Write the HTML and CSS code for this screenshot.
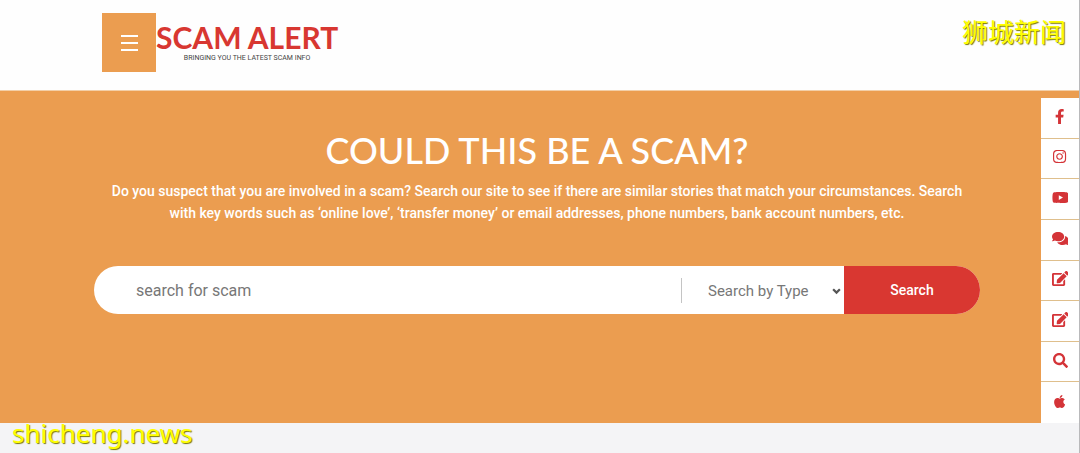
FILE: index.html
```html
<!DOCTYPE html>
<html lang="en">
<head>
<meta charset="utf-8">
<meta name="viewport" content="width=device-width, initial-scale=1">
<title>Scam Alert</title>
<link rel="stylesheet" href="styles.css">
</head>
<body>
<header class="site-header">
  <button class="menu-button" type="button" aria-label="Menu">
    <svg class="menu-icon" viewBox="0 0 18 18" aria-hidden="true"><path d="M1 2h17M1 9h17M1 16h17"/></svg>
  </button>
  <a class="brand" href="#">
    <span class="brand-name">SCAM ALERT</span>
    <span class="brand-tagline">BRINGING YOU THE LATEST SCAM INFO</span>
  </a>
  <span class="watermark watermark-top" lang="zh">狮城新闻</span>
</header>
<main class="hero">
  <h1 class="hero-title">COULD THIS BE A SCAM?</h1>
  <p class="hero-text">Do you suspect that you are involved in a scam? Search our site to see if there are similar stories that match your circumstances. Search with key words such as ‘online love’, ‘transfer money’ or email addresses, phone numbers, bank account numbers, etc.</p>
  <form class="search">
    <input class="search-input" type="text" placeholder="search for scam" aria-label="search for scam">
    <div class="search-type">
      <select class="search-select" aria-label="Search by Type"><option>Search by Type</option></select>
      <svg class="search-arrow" viewBox="0 0 8 6" aria-hidden="true"><path d="M1 1l3 3 3-3"/></svg>
    </div>
    <button class="search-button" type="submit">Search</button>
  </form>
  <nav class="rail" aria-label="Quick links">
    <a class="rail-link" href="#" aria-label="Facebook"><svg class="rail-icon" viewBox="0 0 320 512"><path d="M279.14 288l14.22-92.66h-88.91v-60.13c0-25.35 12.42-50.06 52.24-50.06h40.42V6.26S260.43 0 225.36 0c-73.22 0-121.08 44.38-121.08 124.72v70.62H22.89V288h81.39v224h100.17V288z"/></svg></a>
    <a class="rail-link" href="#" aria-label="Instagram"><svg class="rail-icon" viewBox="0 0 448 512"><path d="M224.1 141c-63.6 0-114.9 51.3-114.9 114.9s51.3 114.9 114.9 114.9S339 319.5 339 255.900 287.700 141 224.100 141zm0 189.600c-41.100 0-74.700-33.500-74.700-74.700s33.500-74.700 74.700-74.700 74.700 33.500 74.700 74.700-33.600 74.700-74.700 74.700zm146.400-194.300c0 14.900-12 26.800-26.800 26.800-14.900 0-26.800-12-26.800-26.800s12-26.800 26.800-26.800 26.800 12 26.800 26.800zm76.100 27.200c-1.700-35.900-9.900-67.700-36.200-93.900-26.200-26.200-58-34.400-93.900-36.200-37-2.100-147.900-2.100-184.900 0-35.800 1.700-67.600 9.900-93.900 36.100s-34.400 58-36.200 93.900c-2.100 37-2.100 147.900 0 184.900 1.700 35.900 9.900 67.700 36.200 93.900s58 34.400 93.900 36.200c37 2.100 147.900 2.100 184.900 0 35.900-1.700 67.700-9.900 93.900-36.200 26.200-26.200 34.400-58 36.200-93.900 2.100-37 2.100-147.800 0-184.800zM398.800 388c-7.800 19.600-22.900 34.700-42.600 42.600-29.500 11.700-99.500 9-132.100 9s-102.700 2.600-132.100-9c-19.600-7.800-34.700-22.900-42.600-42.600-11.700-29.500-9-99.500-9-132.100s-2.600-102.700 9-132.100c7.800-19.600 22.900-34.700 42.600-42.600 29.500-11.700 99.500-9 132.100-9s102.700-2.600 132.100 9c19.600 7.800 34.700 22.900 42.600 42.600 11.700 29.500 9 99.500 9 132.100s2.700 102.700-9 132.100z"/></svg></a>
    <a class="rail-link" href="#" aria-label="YouTube"><svg class="rail-icon" viewBox="0 0 576 512"><path d="M549.655 124.083c-6.281-23.65-24.787-42.276-48.284-48.597C458.781 64 288 64 288 64S117.22 64 74.629 75.486c-23.497 6.322-42.003 24.947-48.284 48.597-11.412 42.867-11.412 132.305-11.412 132.305s0 89.438 11.412 132.305c6.281 23.65 24.787 41.5 48.284 47.821C117.22 448 288 448 288 448s170.78 0 213.371-11.486c23.497-6.321 42.003-24.171 48.284-47.821 11.412-42.867 11.412-132.305 11.412-132.305s0-89.438-11.412-132.305zm-317.51 213.508V175.185l142.739 81.205-142.739 81.201z"/></svg></a>
    <a class="rail-link" href="#" aria-label="Chat"><svg class="rail-icon" viewBox="0 0 576 512"><path d="M416 192c0-88.4-93.1-160-208-160S0 103.6 0 192c0 34.3 14.1 65.9 38 92-13.4 30.2-35.5 54.2-35.8 54.5-2.2 2.3-2.8 5.7-1.5 8.7S4.800 352 8 352c36.600 0 66.900-12.300 88.700-25 32.200 15.700 70.300 25 111.300 25 114.900 0 208-71.600 208-160zm122 220c23.900-26 38-57.700 38-92 0-66.900-53.500-124.200-129.300-148.100.9 6.600 1.300 13.300 1.300 20.100 0 105.900-107.700 192-240 192-10.800 0-21.300-.8-31.700-1.900C207.800 439.600 281.800 480 368 480c41 0 79.100-9.200 111.300-25 21.800 12.700 52.100 25 88.700 25 3.200 0 6.100-1.900 7.300-4.800 1.300-2.900.7-6.300-1.500-8.700-.3-.3-22.400-24.200-35.800-54.500z"/></svg></a>
    <a class="rail-link" href="#" aria-label="Report a scam"><svg class="rail-icon" viewBox="0 0 576 512"><path d="M402.600 83.200l90.200 90.200c3.800 3.800 3.800 10 0 13.800L274.400 405.600l-92.800 10.300c-12.400 1.400-22.900-9.100-21.500-21.500l10.300-92.800L388.800 83.200c3.800-3.800 10-3.800 13.800 0zm162-22.900l-48.800-48.800c-15.200-15.200-39.900-15.200-55.200 0l-35.400 35.400c-3.800 3.800-3.800 10 0 13.800l90.200 90.200c3.800 3.800 10 3.800 13.800 0l35.400-35.400c15.200-15.300 15.200-40 0-55.200zM384 346.200V448H64V128h229.800c3.200 0 6.200-1.300 8.500-3.500l40-40c7.600-7.600 2.200-20.500-8.500-20.500H48C21.500 64 0 85.500 0 112v352c0 26.500 21.500 48 48 48h352c26.500 0 48-21.500 48-48V306.200c0-10.700-12.900-16-20.500-8.500l-40 40c-2.200 2.300-3.500 5.300-3.500 8.500z"/></svg></a>
    <a class="rail-link" href="#" aria-label="Share a story"><svg class="rail-icon" viewBox="0 0 576 512"><path d="M402.600 83.200l90.200 90.200c3.800 3.800 3.800 10 0 13.800L274.400 405.600l-92.800 10.300c-12.400 1.400-22.900-9.100-21.500-21.500l10.300-92.800L388.800 83.200c3.800-3.800 10-3.800 13.800 0zm162-22.900l-48.800-48.800c-15.200-15.200-39.900-15.200-55.200 0l-35.400 35.400c-3.800 3.800-3.800 10 0 13.800l90.200 90.200c3.800 3.800 10 3.800 13.800 0l35.400-35.400c15.200-15.300 15.200-40 0-55.200zM384 346.200V448H64V128h229.800c3.200 0 6.200-1.300 8.500-3.500l40-40c7.600-7.600 2.200-20.500-8.500-20.500H48C21.500 64 0 85.500 0 112v352c0 26.500 21.500 48 48 48h352c26.500 0 48-21.500 48-48V306.200c0-10.700-12.900-16-20.500-8.500l-40 40c-2.200 2.300-3.500 5.300-3.500 8.500z"/></svg></a>
    <a class="rail-link" href="#" aria-label="Search"><svg class="rail-icon" viewBox="0 0 512 512"><path d="M505 442.700L405.300 343c-4.500-4.500-10.600-7-17-7H372c27.600-35.300 44-79.700 44-128C416 93.100 322.900 0 208 0S0 93.100 0 208s93.100 208 208 208c48.300 0 92.700-16.400 128-44v16.300c0 6.400 2.500 12.500 7 17l99.700 99.700c9.400 9.400 24.600 9.400 33.900 0l28.300-28.300c9.400-9.400 9.400-24.600.1-34zM208 336c-70.700 0-128-57.200-128-128 0-70.700 57.200-128 128-128 70.700 0 128 57.200 128 128 0 70.700-57.200 128-128 128z"/></svg></a>
    <a class="rail-link" href="#" aria-label="Apple"><svg class="rail-icon" viewBox="0 0 384 512"><path d="M318.700 268.700c-.2-36.700 16.400-64.400 50-84.800-18.800-26.900-47.200-41.700-84.700-44.600-35.500-2.800-74.300 20.700-88.500 20.700-15 0-49.400-19.700-76.400-19.700C63.300 141.200 4 184.800 4 273.500q0 39.300 14.400 81.200c12.800 36.700 59 126.700 107.200 125.200 25.200-.6 43-17.900 75.800-17.900 31.800 0 48.300 17.900 76.400 17.900 48.600-.7 90.400-82.500 102.600-119.300-65.200-30.700-61.700-90-61.700-91.900zm-56.600-164.200c27.300-32.400 24.800-61.900 24-72.500-24.100 1.400-52 16.400-67.900 34.900-17.500 19.800-27.800 44.300-25.600 71.900 26.100 2 49.900-11.400 69.500-34.300z"/></svg></a>
  </nav>
</main>
<footer class="site-footer">
  <span class="watermark watermark-bottom">shicheng.news</span>
</footer>
</body>
</html>
```

FILE: styles.css
```css
* {
  box-sizing: border-box;
}

body {
  margin: 0;
  min-height: 100vh;
  display: flex;
  flex-direction: column;
  border-right: 1px solid #b9b9bb;
  background: #f4f4f6;
  font-family: Roboto, "Liberation Sans", sans-serif;
}

.site-header {
  position: relative;
  display: flex;
  align-items: flex-start;
  padding: 13px 102px 18px;
  border-bottom: 1px solid #f3cfa8;
  background: #fefefe;
}

.menu-button {
  display: flex;
  align-items: center;
  justify-content: center;
  width: 54px;
  height: 59px;
  padding: 0;
  border: 0;
  background: #eb9d50;
}

.menu-icon {
  width: 18px;
  height: 18px;
  fill: none;
  stroke: #fff;
  stroke-width: 2;
}

.brand {
  display: flex;
  flex-direction: column;
  align-items: center;
  padding-top: 7px;
  text-decoration: none;
}

.brand-name {
  color: #d83731;
  font: 700 30px/34px Lato, sans-serif;
}

.brand-tagline {
  color: #444;
  font-size: 7px;
  line-height: 8px;
}

.hero {
  position: relative;
  padding: 35px 99px 109px 94px;
  background: #eb9d50;
  color: #fff;
  text-align: center;
}

.hero-title {
  margin: 0;
  font: 500 36px/48px Lato, sans-serif;
}

.hero-text {
  margin: 6px 0 42px;
  padding: 0 10px;
  font-size: 14px;
  font-weight: 500;
  line-height: 22px;
}

.search {
  display: flex;
  height: 48px;
  overflow: hidden;
  border-radius: 24px;
  background: #fff;
}

.search-input {
  flex: 1;
  min-width: 0;
  padding: 0 42px;
  border: 0;
  outline: 0;
  background: none;
  color: #777;
  font: 16px Roboto, sans-serif;
}

.search-input::placeholder {
  color: #777;
}

.search-type {
  position: relative;
  display: flex;
  width: 163px;
  margin: 12px 0 11px;
  border-left: 1px solid #c4c4c4;
}

.search-select {
  appearance: none;
  width: 100%;
  padding: 0 26px;
  border: 0;
  background: none;
  color: #777;
  font: 15px Roboto, sans-serif;
}

.search-arrow {
  position: absolute;
  top: 10px;
  right: 3px;
  width: 9px;
  height: 7px;
  fill: none;
  stroke: #555;
  stroke-width: 2;
  pointer-events: none;
}

.search-button {
  width: 136px;
  border: 0;
  background: #d93731;
  color: #fff;
  font: 500 14px Roboto, sans-serif;
}

.rail {
  position: absolute;
  top: 7px;
  right: 0;
  bottom: 0;
  width: 38px;
  display: grid;
  grid-auto-rows: 1fr;
}

.rail-link {
  display: flex;
  align-items: center;
  justify-content: center;
  padding-bottom: 3px;
  border-bottom: 1px solid #dfbf8c;
  background: #fff;
}

.rail-link:last-child {
  border-bottom: 0;
}

.rail-icon {
  height: 15px;
  fill: #d43438;
}

.site-footer {
  position: relative;
  flex: 1;
  min-height: 30px;
}

.watermark {
  position: absolute;
  color: #ffff00;
  text-shadow: 1px 1px 1px #777700;
  white-space: nowrap;
}

.watermark-top {
  top: 13px;
  right: 13px;
  font: 26px/36px "Noto Sans CJK SC", sans-serif;
}

.watermark-bottom {
  top: -8px;
  left: 12px;
  font: 26px/36px "Noto Sans", sans-serif;
}
```
